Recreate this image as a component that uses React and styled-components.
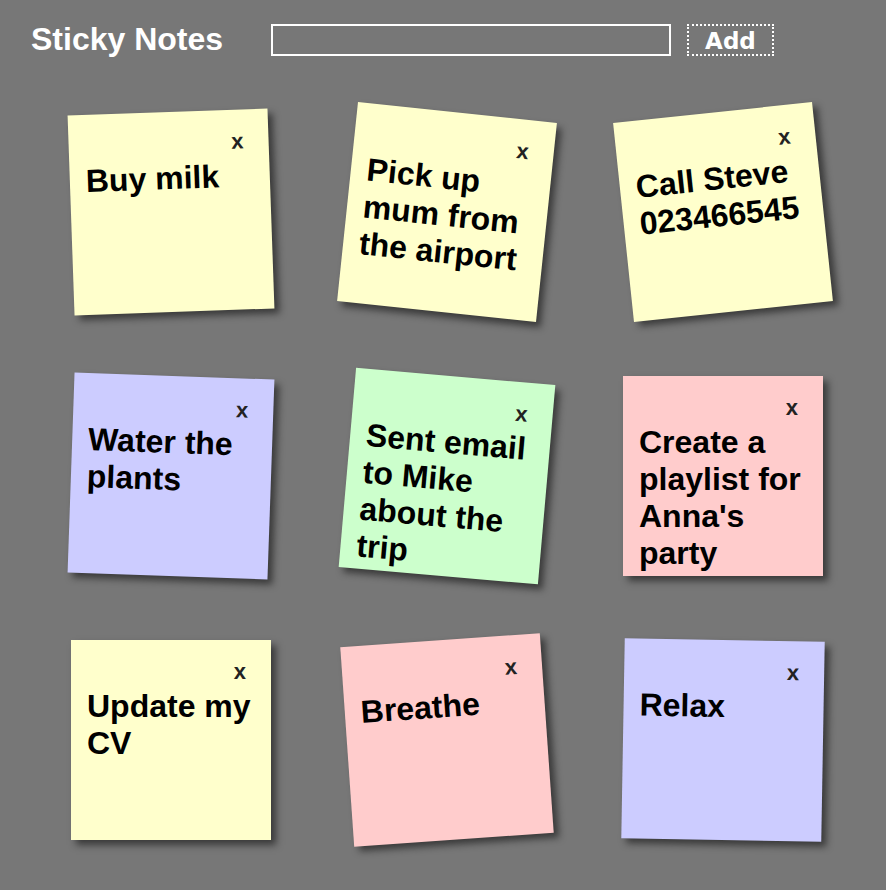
import React, { useState } from 'react';
import styled, { createGlobalStyle } from 'styled-components';

const GlobalStyle = createGlobalStyle`
	body {
		margin: 0;
		background: #777;
		font-family: 'Liberation Sans', Arial, sans-serif;
	}
`;

const Page = styled.div`
	padding-top: 21px;
	min-height: 869px;
`;

const Header = styled.header`
	display: flex;
	align-items: center;
	padding-left: 31px;
`;

const Title = styled.h1`
	margin: 0;
	font-size: 32px;
	font-weight: bold;
	color: #fff;
	line-height: normal;
`;

const AddForm = styled.form`
	display: flex;
	align-items: center;
	gap: 16px;
	margin-left: 48px;
`;

const NoteInput = styled.input`
	box-sizing: border-box;
	width: 400px;
	height: 32px;
	border: 2px solid #fff;
	background: transparent;
	color: #fff;
	font-size: 18px;
	outline: none;
`;

const AddButton = styled.button`
	box-sizing: border-box;
	height: 32px;
	padding: 3px 16px 0;
	border: 2px dotted #fff;
	background: transparent;
	color: #fff;
	font-family: 'DejaVu Sans', sans-serif;
	font-size: 23px;
	font-weight: bold;
	line-height: 1;
	cursor: pointer;
`;

const Board = styled.ul`
	list-style: none;
	margin: 0;
	padding: 54px 0 0 71px;
	display: grid;
	grid-template-columns: repeat(3, 200px);
	column-gap: 76px;
	row-gap: 64px;
`;

const Note = styled.li`
	box-sizing: border-box;
	width: 200px;
	height: 200px;
	padding: 16px;
	display: flex;
	flex-direction: column;
	background: ${(p) => p.$color};
	box-shadow: 5px 5px 7px rgba(33, 33, 33, 0.7);
	transform: rotate(${(p) => p.$angle}deg);
	overflow: hidden;
`;

const Close = styled.button`
	align-self: flex-end;
	margin: 3px 9px 4px 0;
	padding: 0;
	border: 0;
	background: none;
	color: #222;
	font-family: 'Liberation Sans', Arial, sans-serif;
	font-size: 22px;
	font-weight: bold;
	line-height: 25px;
	cursor: pointer;
`;

const NoteText = styled.p`
	margin: 0;
	font-size: 32px;
	font-weight: bold;
	line-height: normal;
	color: #000;
`;

const COLORS = {
	yellow: '#ffc',
	blue: '#ccf',
	green: '#cfc',
	pink: '#fcc',
};

const initialNotes = [
	{ id: 1, text: 'Buy milk', color: 'yellow', angle: -2 },
	{ id: 2, text: 'Pick up mum from the airport', color: 'yellow', angle: 6 },
	{ id: 3, text: 'Call Steve 023466545', color: 'yellow', angle: -6 },
	{ id: 4, text: 'Water the plants', color: 'blue', angle: 2 },
	{ id: 5, text: 'Sent email to Mike about the trip', color: 'green', angle: 5 },
	{ id: 6, text: "Create a playlist for Anna's party", color: 'pink', angle: 0 },
	{ id: 7, text: 'Update my CV', color: 'yellow', angle: 0 },
	{ id: 8, text: 'Breathe', color: 'pink', angle: -4 },
	{ id: 9, text: 'Relax', color: 'blue', angle: 1 },
];

export default function App() {
	const [notes, setNotes] = useState(initialNotes);
	const [draft, setDraft] = useState('');

	const addNote = (e) => {
		e.preventDefault();
		if (!draft.trim()) return;
		setNotes([
			...notes,
			{ id: Date.now(), text: draft, color: 'yellow', angle: 0 },
		]);
		setDraft('');
	};

	return (
		<Page>
			<GlobalStyle />
			<Header>
				<Title>Sticky Notes</Title>
				<AddForm onSubmit={addNote}>
					<NoteInput
						value={draft}
						onChange={(e) => setDraft(e.target.value)}
					/>
					<AddButton type="submit">Add</AddButton>
				</AddForm>
			</Header>
			<Board>
				{notes.map((note) => (
					<Note key={note.id} $color={COLORS[note.color]} $angle={note.angle}>
						<Close
							onClick={() => setNotes(notes.filter((n) => n.id !== note.id))}
						>
							x
						</Close>
						<NoteText>{note.text}</NoteText>
					</Note>
				))}
			</Board>
		</Page>
	);
}
